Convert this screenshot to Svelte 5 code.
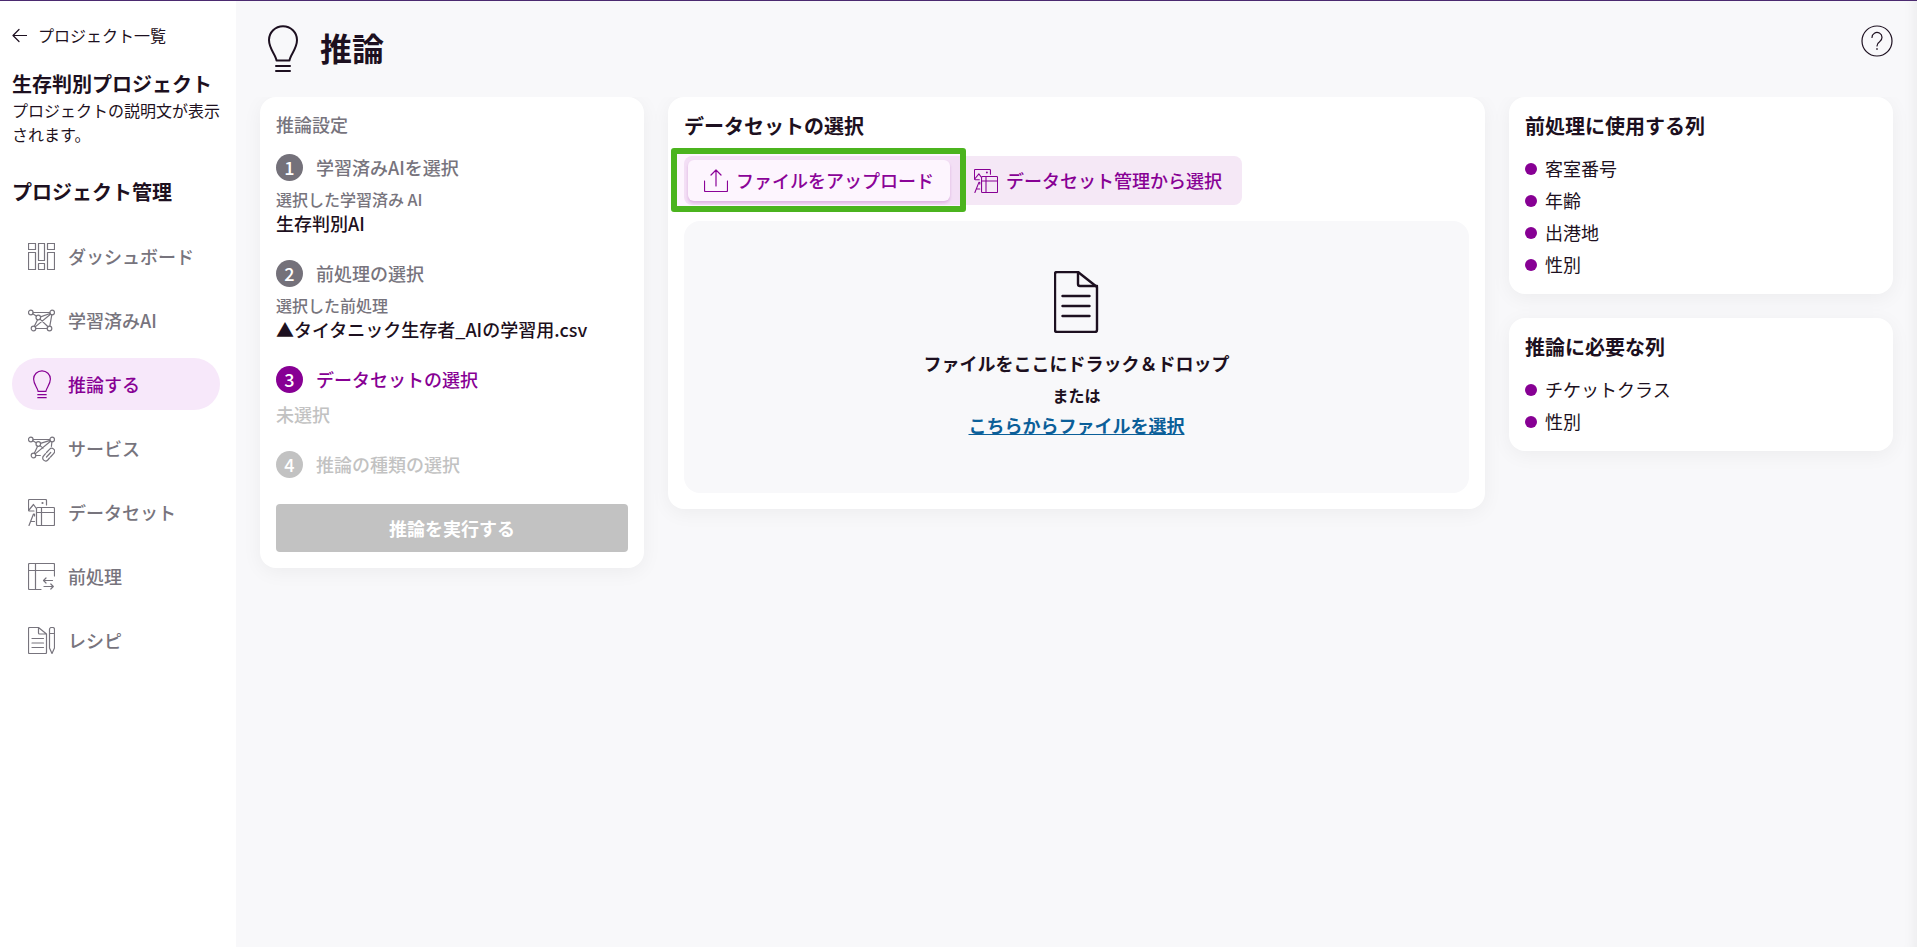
<script>
  const navItems = [
    { id: 'dashboard', label: 'ダッシュボード' },
    { id: 'model', label: '学習済みAI' },
    { id: 'inference', label: '推論する' },
    { id: 'service', label: 'サービス' },
    { id: 'dataset', label: 'データセット' },
    { id: 'preprocess', label: '前処理' },
    { id: 'recipe', label: 'レシピ' }
  ];

  const steps = [
    { title: '学習済みAIを選択', caption: '選択した学習済み AI', value: '生存判別AI', status: 'done' },
    { title: '前処理の選択', caption: '選択した前処理', value: '▲タイタニック生存者_AIの学習用.csv', status: 'done' },
    { title: 'データセットの選択', value: '未選択', status: 'current' },
    { title: '推論の種類の選択', status: 'waiting' }
  ];

  const columnCards = [
    { title: '前処理に使用する列', columns: ['客室番号', '年齢', '出港地', '性別'] },
    { title: '推論に必要な列', columns: ['チケットクラス', '性別'] }
  ];

  let activeNav = $state('inference');
  let source = $state('upload');
  let fileInput;

  function pickFile(e) {
    e.preventDefault();
    fileInput.click();
  }
</script>

{#snippet bulb()}
  <svg class="icon-bulb" viewBox="0 0 30 48" aria-hidden="true">
    <path d="M8.5 35.5 C8 30 1 24 1 15 A14 13.8 0 0 1 29 15 C29 24 22 30 21.5 35.5 Z" />
    <path d="M8 41h14M8 46h14" />
  </svg>
{/snippet}

{#snippet datasetIcon()}
  <svg class="icon" viewBox="0 0 27 27" aria-hidden="true">
    <path d="M6 12H1.5a1 1 0 0 1-1-1V1.500a1 1 0 0 1 1-1h16a1 1 0 0 1 1 1V6" />
    <path d="M1 11l4.500-5.500L8 9" />
    <circle cx="14.500" cy="4" r="0.500" />
    <path d="M1 26.500L5.500 15M3 22.500h3.500M6.500 15v2" />
    <rect x="8.500" y="8.500" width="18" height="18" rx="1" />
    <path d="M13.500 8.500v18M8.500 13.500h18" />
  </svg>
{/snippet}

{#snippet navIcon(id)}
  {#if id === 'dashboard'}
    <svg class="icon" viewBox="0 0 27 27" aria-hidden="true">
      <path d="M.5.5h7v6h-7zM10.500.5h6v17h-6zM19.500.5h7v6h-7zM.5 9.500h7v17h-7zM10.500 20.500h6v6h-6zM19.500 9.500h7v17h-7z" />
    </svg>
  {:else if id === 'model'}
    <svg class="icon" viewBox="0 0 27 27" aria-hidden="true">
      <circle cx="2.800" cy="5.500" r="2.300" />
      <circle cx="24.200" cy="5.500" r="2.300" />
      <circle cx="10.300" cy="10.500" r="2.300" />
      <circle cx="5.500" cy="21.500" r="2.300" />
      <circle cx="21.500" cy="21.500" r="2.300" />
      <path d="M5.100 5.500h16.800M7.800 21.500h11.400M4.800 6.800l3.400 2.300M12.500 9.900l9.600-3.400M9.600 12.700L6.300 19.300M23.800 7.800l-2 11.400M22.500 7.200L7.200 19.900M12 12.100l8 7.700" />
    </svg>
  {:else if id === 'inference'}
    {@render bulb()}
  {:else if id === 'service'}
    <svg class="icon" viewBox="0 0 27 27" aria-hidden="true">
      <circle cx="2.800" cy="4.500" r="2.300" />
      <circle cx="24.200" cy="4.500" r="2.300" />
      <circle cx="10.300" cy="9" r="2.300" />
      <circle cx="5.500" cy="20.500" r="2.300" />
      <path d="M5.100 4.500h16.800M7.800 20.500h4.500M4.800 5.700l3.400 2.100M12.500 8.400l9.600-3M9.600 11.200L6.300 18.300M22.500 6.200L7.200 18.900M12 10.600l3 2.500M23.900 6.800l-.5 4.500" />
      <path d="M18.500 17.500l3-3.200a2.900 2.900 0 0 1 4.300 4L22.500 22M21.500 23L19.800 25a2.900 2.900 0 0 1-4.300-4l2-2.300M18.500 22l4.200-4.500" />
    </svg>
  {:else if id === 'dataset'}
    {@render datasetIcon()}
  {:else if id === 'preprocess'}
    <svg class="icon" viewBox="0 0 27 27" aria-hidden="true">
      <path d="M13 26.500H1.500a1 1 0 0 1-1-1v-24a1 1 0 0 1 1-1h24a1 1 0 0 1 1 1V13M7.500.5v26M.5 7.500h26" />
      <path d="M24.500 17.500h-9M18 15l-2.500 2.500L18 20M16 23.500h9M22.800 21l2.500 2.500-2.500 2.500" />
    </svg>
  {:else}
    <svg class="icon" viewBox="0 0 27 27" aria-hidden="true">
      <path d="M10.500.5h-9a1 1 0 0 0-1 1v24a1 1 0 0 0 1 1h16a1 1 0 0 0 1-1V7z M10.500.5V6a1 1 0 0 0 1 1h7M4 11.500h11.500M4 16h11.500M4 20.500h11.500" />
      <path d="M21.500 2.500a2 2 0 0 1 2-2h1a2 2 0 0 1 2 2V21L24 26.500 21.500 21zM21.500 6.500h5" />
    </svg>
  {/if}
{/snippet}

<div class="app">
  <aside class="sidebar">
    <a class="back" href="#projects">
      <svg viewBox="0 0 15 15" aria-hidden="true"><path d="M14.500 7.500H1M7 1.500l-6 6 6 6" /></svg>
      プロジェクト一覧
    </a>
    <h2 class="project-name">生存判別プロジェクト</h2>
    <p class="project-desc">プロジェクトの説明文が表示されます。</p>
    <h3 class="nav-title">プロジェクト管理</h3>
    <nav>
      {#each navItems as item}
        <a
          href={'#' + item.id}
          class="nav-item"
          class:active={activeNav === item.id}
          onclick={() => (activeNav = item.id)}
        >
          <span class="nav-icon">{@render navIcon(item.id)}</span>
          {item.label}
        </a>
      {/each}
    </nav>
  </aside>

  <main>
    <header>
      {@render bulb()}
      <h1>推論</h1>
      <button class="help" aria-label="ヘルプ">
        <svg viewBox="0 0 32 32" aria-hidden="true">
          <circle cx="16" cy="16" r="15" />
          <path d="M11 12.500a5 5 0 1 1 7.600 4.200c-1.800 1.100-2.600 1.700-2.600 4.300" />
          <path d="M16 23.500v1" />
        </svg>
      </button>
    </header>

    <div class="board">
      <section class="card settings">
        <h2 class="settings-title">推論設定</h2>
        <ol class="steps">
          {#each steps as step, i}
            <li class={step.status}>
              <div class="step-head"><span class="num">{i + 1}</span>{step.title}</div>
              {#if step.value}
                <div class="step-body">
                  {#if step.caption}<p class="caption">{step.caption}</p>{/if}
                  <p class="value">{step.value}</p>
                </div>
              {/if}
            </li>
          {/each}
        </ol>
        <button class="btn-run" disabled>推論を実行する</button>
      </section>

      <section class="card">
        <h2 class="card-title">データセットの選択</h2>
        <div class="switch">
          <button class:selected={source === 'upload'} onclick={() => (source = 'upload')}>
            <svg class="icon" viewBox="0 0 24 24" aria-hidden="true">
              <path d="M.5 12v9.500a1 1 0 0 0 1 1h21a1 1 0 0 0 1-1V12M12 17V1M7 6l5-5 5 5" />
            </svg>
            ファイルをアップロード
          </button>
          <button class:selected={source === 'dataset'} onclick={() => (source = 'dataset')}>
            {@render datasetIcon()}
            データセット管理から選択
          </button>
          <span class="marker"></span>
        </div>
        <div class="dropzone">
          <svg class="file" viewBox="0 0 46 62" aria-hidden="true">
            <path d="M24 1H3a2 2 0 0 0-2 2v56a2 2 0 0 0 2 2h38a2 2 0 0 0 2-2V16z" />
            <path d="M24 1v12a2 2 0 0 0 2 2h17M8.500 25h27M8.500 35h27M8.500 45h27" />
          </svg>
          <p class="drop-text">ファイルをここにドラック＆ドロップ</p>
          <p class="drop-or">または</p>
          <a href="#file" onclick={pickFile}>こちらからファイルを選択</a>
          <input type="file" bind:this={fileInput} aria-label="ファイル" hidden />
        </div>
      </section>

      <div class="side">
        {#each columnCards as card}
          <section class="card">
            <h2 class="card-title">{card.title}</h2>
            <ul>
              {#each card.columns as column}
                <li>{column}</li>
              {/each}
            </ul>
          </section>
        {/each}
      </div>
    </div>
  </main>
</div>

<style>
  :global(body) {
    background: #f8f8fa;
  }

  .app {
    --ink: #1d1020;
    --gray: #77747d;
    --purple: #870094;
    --disabled: #c2c2c2;
    display: flex;
    min-height: 100vh;
    box-sizing: border-box;
    border-top: 1px solid #4b2a70;
    font-family: "Noto Sans CJK JP", "Noto Sans", sans-serif;
    font-size: 18px;
    font-weight: 500;
    line-height: 27px;
    color: var(--ink);
  }

  h1, h2, h3, p, ul, ol { margin: 0; padding: 0; }
  ul, ol { list-style: none; }
  a { color: inherit; text-decoration: none; }
  button { font: inherit; border: 0; cursor: pointer; }

  svg {
    fill: none;
    stroke: currentColor;
    stroke-width: 1.2;
    stroke-linecap: round;
    stroke-linejoin: round;
    flex-shrink: 0;
  }

  .icon { width: 27px; height: 27px; }

  /* Sidebar */
  .sidebar {
    width: 236px;
    flex-shrink: 0;
    box-sizing: border-box;
    padding: 22px 16px 24px 12px;
    background: #fff;
  }

  .back {
    display: flex;
    align-items: center;
    gap: 11px;
    font-size: 16px;
    line-height: 24px;
    font-weight: 400;
  }

  .back svg { width: 15px; height: 15px; }

  .project-name {
    margin-top: 22px;
    font-size: 20px;
    line-height: 29px;
    font-weight: 700;
  }

  .project-desc {
    font-size: 16px;
    line-height: 24px;
    font-weight: 400;
  }

  .nav-title {
    margin: 31px 0 23px;
    font-size: 20px;
    line-height: 30px;
    font-weight: 700;
  }

  nav {
    display: flex;
    flex-direction: column;
    gap: 12px;
  }

  .nav-item {
    display: flex;
    align-items: center;
    gap: 13px;
    height: 52px;
    padding: 0 16px;
    border-radius: 26px;
    color: var(--gray);
  }

  .nav-item.active {
    background: #f7e8fa;
    color: var(--purple);
  }

  .nav-icon {
    display: flex;
    justify-content: center;
    width: 27px;
  }

  .nav-icon .icon-bulb { width: 18px; height: 29px; stroke-width: 2; }

  /* Main */
  main {
    flex: 1;
    min-width: 0;
    display: flex;
    flex-direction: column;
    box-shadow: inset -14px 0 14px -12px rgba(0, 0, 0, 0.06);
  }

  header {
    display: flex;
    align-items: center;
    height: 96px;
    padding: 0 24px;
  }

  header .icon-bulb {
    width: 30px;
    height: 48px;
    margin-left: 8px;
    stroke-width: 2;
  }

  h1 {
    margin: 0 0 4px 22px;
    font-size: 32px;
    line-height: 48px;
    font-weight: 700;
  }

  .help {
    margin: 0 0 17px auto;
    padding: 0;
    background: none;
    color: var(--ink);
    line-height: 0;
  }

  .help svg { width: 32px; height: 32px; }

  .board {
    flex: 1;
    display: grid;
    grid-template-columns: 384px minmax(0, 1fr) 384px;
    gap: 24px;
    align-items: start;
    padding: 0 24px 24px;
    overflow: hidden;
  }

  .card {
    padding: 16px;
    border-radius: 16px;
    background: #fff;
    box-shadow: 0 4px 20px rgba(0, 0, 0, 0.05);
  }

  .card-title {
    font-size: 20px;
    line-height: 26px;
    font-weight: 700;
  }

  .settings-title {
    font-size: 18px;
    line-height: 23px;
    font-weight: 500;
    color: var(--gray);
  }

  .steps {
    display: flex;
    flex-direction: column;
    gap: 23px;
    margin: 18px 0 26px;
  }

  .step-head {
    display: flex;
    align-items: center;
    gap: 13px;
    color: var(--gray);
  }

  .num {
    width: 27px;
    height: 27px;
    border-radius: 50%;
    background: #74717a;
    color: #fff;
    text-align: center;
  }

  .step-body { margin-top: 8px; }

  .caption {
    font-size: 16px;
    line-height: 21px;
    color: var(--gray);
  }

  .current .step-head { color: var(--purple); }
  .current .num { background: var(--purple); }
  .current .value, .waiting .step-head { color: var(--disabled); }
  .waiting .num { background: var(--disabled); }

  .btn-run {
    width: 100%;
    height: 48px;
    border-radius: 4px;
    background: var(--disabled);
    color: #fff;
    font-weight: 700;
  }

  /* Upload / dataset switch */
  .switch {
    position: relative;
    display: flex;
    gap: 8px;
    width: fit-content;
    margin: 17px 0 16px;
    padding: 4px;
    border-radius: 8px;
    background: #f5e8f6;
  }

  .switch button {
    display: flex;
    align-items: center;
    gap: 8px;
    height: 41px;
    padding: 0 16px;
    border-radius: 6px;
    background: none;
    color: var(--purple);
  }

  .switch .icon { width: 24px; height: 24px; }

  .switch button.selected {
    background: #fff;
    box-shadow: 0 2px 3px rgba(135, 0, 148, 0.2);
  }

  .marker {
    position: absolute;
    inset: -8px auto -7px -13px;
    width: 283px;
    border: 6px solid #4bb41e;
    border-radius: 3px;
    background: rgba(210, 60, 235, 0.05);
    pointer-events: none;
  }

  .dropzone {
    display: flex;
    flex-direction: column;
    align-items: center;
    padding: 50px 16px 54px;
    border-radius: 16px;
    background: #f8f8fa;
    font-weight: 700;
  }

  .file {
    width: 46px;
    height: 62px;
    stroke-width: 2.4;
  }

  .drop-text { margin-top: 17px; }

  .drop-or {
    margin: 6px 0 5px;
    font-size: 16px;
    line-height: 24px;
  }

  .dropzone a {
    color: #0b5f99;
    text-decoration: underline;
  }

  /* Column lists */
  .side {
    display: flex;
    flex-direction: column;
    gap: 24px;
  }

  ul {
    display: flex;
    flex-direction: column;
    gap: 5px;
    margin-top: 16px;
  }

  ul li {
    display: flex;
    align-items: center;
    gap: 8px;
    font-weight: 400;
  }

  ul li::before {
    content: '';
    width: 12px;
    height: 12px;
    border-radius: 50%;
    background: var(--purple);
  }
</style>
